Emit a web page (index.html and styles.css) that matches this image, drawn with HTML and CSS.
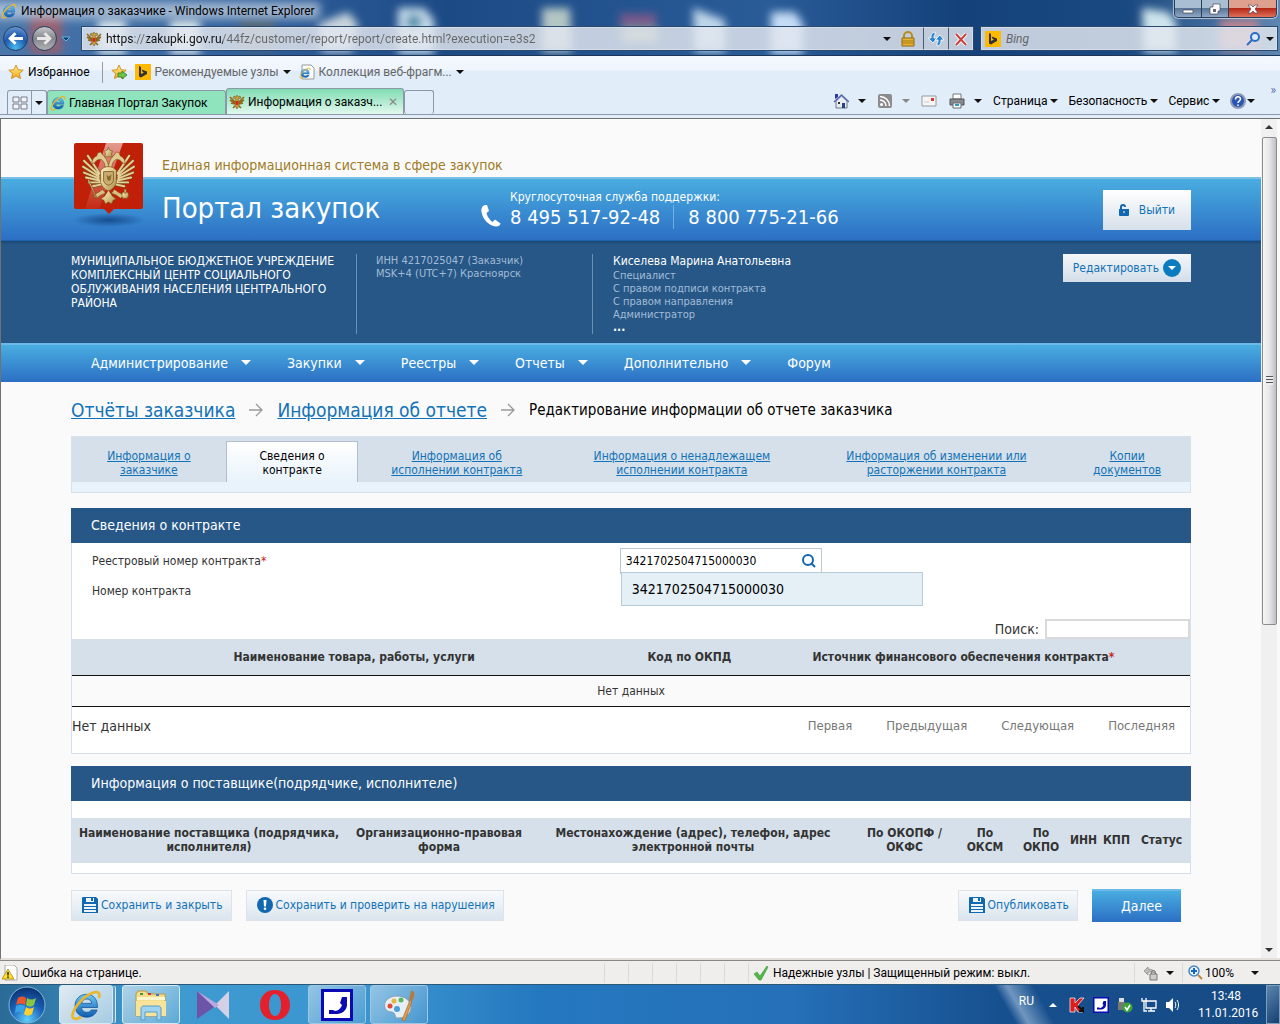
FILE: index.html
```html
<!DOCTYPE html>
<html lang="ru">
<head>
    <meta charset="UTF-8">
    <meta name="viewport" content="width=device-width, initial-scale=1.0">
    <title>Информация о заказчике</title>
    <link rel="stylesheet" href="styles.css">
</head>
<body>
    <!-- Shared icons -->
    <svg class="sprite" aria-hidden="true">
        <defs>
            <linearGradient id="gold" x1="0" y1="0" x2="1" y2="1">
                <stop offset="0" stop-color="#fff3c4"/>
                <stop offset=".5" stop-color="#dcc487"/>
                <stop offset="1" stop-color="#a98a45"/>
            </linearGradient>
            <radialGradient id="blue-ball" cx=".5" cy=".9" r=".9">
                <stop offset="0" stop-color="#5fd0ff"/>
                <stop offset=".5" stop-color="#1b63b8"/>
                <stop offset="1" stop-color="#0b2f6e"/>
            </radialGradient>
            <linearGradient id="ie-blue" x1="0" y1="0" x2="0" y2="1">
                <stop offset="0" stop-color="#6fc8f5"/>
                <stop offset="1" stop-color="#0c5cb0"/>
            </linearGradient>
            <linearGradient id="star-fill" x1="0" y1="0" x2="0" y2="1">
                <stop offset="0" stop-color="#fff08a"/>
                <stop offset="1" stop-color="#f5a418"/>
            </linearGradient>
        </defs>
        <symbol id="ie" viewBox="0 0 32 32">
            <path d="M27.500 18.500H11.500c.3 3 2.400 4.800 5.200 4.800 2.200 0 3.700-.8 4.600-2.300h5.800c-1.500 4.600-5.400 7.200-10.500 7.200C9.800 28.200 5 23.500 5 16.800S9.900 5.300 16.500 5.300c7 0 11.300 5 11 13.200zM21.700 14.400c-.3-2.800-2.300-4.400-5-4.400s-4.700 1.600-5.100 4.400z" fill="url(#ie-blue)" stroke="#0b4a92" stroke-width=".7"/>
            <path d="M29 9C30.500 4 28 2 23.500 3.500 14 6.500 3.500 18.500 2.500 26c-.6 5 4 4.500 8.500 2" fill="none" stroke="#e9b62c" stroke-width="2.600"/>
        </symbol>
        <symbol id="bing" viewBox="0 0 16 16">
            <path d="M0 0h16v16H0z" fill="#ffb900"/>
            <path d="M4 2l2 1v7l3-1.500-1.500-.8L6.600 5.500 12 7.500v2.600L6 13.600l-2-1.200z" fill="#333"/>
        </symbol>
        <symbol id="star" viewBox="0 0 16 16">
            <path d="M8 1l2.100 4.700 5.100.5-3.800 3.400 1.100 5L8 12l-4.500 2.600 1.100-5L.8 6.200l5.100-.5z" fill="url(#star-fill)" stroke="#c98310" stroke-width=".8"/>
        </symbol>
        <symbol id="wing" viewBox="0 0 54 60">
            <path d="M18 27L6 9M17 28L2 14M17 30L1 20M17 32L2 26M18 34L4 31M19 36L7 36M20 38L11 40" fill="none" stroke="#7a4a16" stroke-width="3.200" stroke-linecap="round"/>
            <path d="M18 27L6 9M17 28L2 14M17 30L1 20M17 32L2 26M18 34L4 31M19 36L7 36M20 38L11 40" fill="none" stroke="#e3cf98" stroke-width="2" stroke-linecap="round"/>
            <path d="M24 24c0-5-1-9-4-11-3-1-5 0-7 3l-3 1c0-4 2-7 5-8l1-3 3-1 2 3c3 2 5 6 6 11z" fill="#e0ca90" stroke="#7a4a16" stroke-width=".6"/>
            <path d="M21 43l-4 3-4 2-1 3 3 1 4-3 5-2z" fill="#d8bf80" stroke="#7a4a16" stroke-width=".6"/>
        </symbol>
        <symbol id="eagle" viewBox="0 0 54 60">
            <use href="#wing"/>
            <use href="#wing" transform="matrix(-1 0 0 1 54 0)"/>
            <g fill="url(#gold)" stroke="#7a4a16" stroke-width=".6">
                <path d="M27 0l1 3 3 1-1 3 1 3h-8l1-3-1-3 3-1z"/>
                <path d="M19 24c2-3 5-4 8-4s6 1 8 4v12c-1 4-4 7-8 9-4-2-7-5-8-9z"/>
                <path d="M27 44l4 6 4 3-3 1-2 4-3-2-3 2-2-4-3-1 4-3z"/>
                <circle cx="44" cy="49" r="3.500"/>
                <path d="M43 43h2v4h-2z"/>
                <path d="M6 34l1-1 8 18-1 1z"/>
            </g>
            <path d="M22 25h10v9c0 2-2 4-5 5-3-1-5-3-5-5z" fill="#c9ad70" stroke="#7a5320" stroke-width=".8"/>
            <path d="M25 28l2 2 3-2-1 6h-3z" fill="#8a6a2c"/>
        </symbol>
        <symbol id="eagle-small" viewBox="0 0 16 16">
            <path d="M6 8L1 3M6 9L1 6M6 10L2 9M10 8l5-5M10 9l5-3M10 10l4-1M6 12l-2 2M10 12l2 2" fill="none" stroke="#8d6a1c" stroke-width="1.600"/>
            <path d="M8 1l1 2 2-1 1 2-3 1 1 2v5l-2 3-2-3V7l1-2-3-1 1-2 2 1z" fill="#c9a03c" stroke="#6b4d12" stroke-width=".5"/>
            <path d="M6.500 7h3v3L8 11.500 6.500 10z" fill="#d0281c"/>
        </symbol>
        <symbol id="save" viewBox="0 0 16 16">
            <path d="M0 1a1 1 0 0 1 1-1h13l2 2v14H0z" fill="#1268b0"/>
            <path d="M4 1h8v4H4z" fill="#eef3f8"/>
            <path d="M9 1h2v3H9z" fill="#1268b0"/>
            <path d="M2 7h12v9H2z" fill="#eef3f8"/>
            <path d="M2 9.500h12M2 12.500h12M2 15.500h12" stroke="#1268b0"/>
        </symbol>
        <symbol id="handset" viewBox="0 0 20 22">
            <path d="M4 0C1 1 0 4 .5 7 1.500 14 8 21 15 21.500c3 0 4-1 4.500-3L14 14.500 11.500 17C9 15 6 11 5.500 8L8 6 6 0z" fill="#fff"/>
        </symbol>
        <symbol id="phone-app" viewBox="0 0 32 32">
            <path d="M0 0h32v32H0z" fill="#0a0ab4"/>
            <path d="M3 3h26v26H3z" fill="#fff"/>
            <path d="M21 8h5v8c0 5-5 9-10 9H8v-4h4l2 1c3 0 6-3 7-6l-2-2z" fill="#0a0ab4"/>
        </symbol>
    </svg>

    <!-- Browser frame -->
    <header class="glass">
        <svg class="backdrop" aria-hidden="true">
            <filter id="soft" x="-50%" y="-50%" width="200%" height="200%"><feGaussianBlur stdDeviation="4"/></filter>
            <filter id="haze" x="-50%" y="-50%" width="200%" height="200%"><feGaussianBlur stdDeviation="5"/></filter>
            <g filter="url(#soft)">
                <path d="M30 12h32v42H30z" fill="#96606f"/>
                <path d="M98 20h28v34H98z" fill="#dce6ea"/>
                <path d="M170 20h30v34h-30z" fill="#dce6ea"/>
                <path d="M240 20h34v30h-34z" fill="#53626f"/>
                <path d="M318 24l30-12 10 12-6 28h-30z" fill="#c8d4dc"/>
                <path d="M398 8h26l10 12v34h-36z" fill="#c6dcec"/>
                <circle cx="414" cy="22" r="8" fill="#4d8fa8"/>
                <path d="M542 8h28l2 44h-30z" fill="#b4c6c4"/>
                <path d="M620 14h36v12h-36z" fill="#7f5a8c"/>
                <path d="M622 28h36v14h-36z" fill="#95a892"/>
                <path d="M693 8l32 12v32h-30z" fill="#bed6ea"/>
                <path d="M771 12h24l8 12v30h-32z" fill="#c4dcf6"/>
                <path d="M1142 8l26 4 8 10v30h-32z" fill="#cde4ec"/>
                <path d="M1220 20h38v30h-38z" fill="#c2868e"/>
            </g>
            <rect x="-10" y="2" width="330" height="17" fill="#c4d2e2" opacity=".75" filter="url(#haze)"/>
        </svg>
        <div class="title-bar">
            <svg class="icon"><use href="#ie"/></svg>
            <span class="window-title">Информация о заказчике - Windows Internet Explorer</span>
            <div class="window-buttons">
                <button type="button" aria-label="Свернуть"><svg viewBox="0 0 14 12"><path d="M2 7h10v3H2z" fill="#fff" stroke="#445" stroke-width=".7"/></svg></button>
                <button type="button" aria-label="Развернуть"><svg viewBox="0 0 14 12"><path d="M5 1h7v7h-2v3H2V4h3z" fill="#fff" stroke="#445" stroke-width=".7"/><path d="M5 6h3v3H5z" fill="#667"/></svg></button>
                <button type="button" class="close" aria-label="Закрыть"><svg viewBox="0 0 14 12"><path d="M2 2h3l2 2 2-2h3L9 6l3 4H9L7 8l-2 2H2l3-4z" fill="#fff" stroke="#545" stroke-width=".7"/></svg></button>
            </div>
        </div>
        <div class="address-row">
            <button type="button" class="round back" aria-label="Назад"><svg viewBox="0 0 16 16"><path d="M15 8H3m5-5L3 8l5 5" fill="none" stroke="#fff" stroke-width="2.800"/></svg></button>
            <button type="button" class="round forward" aria-label="Вперед"><svg viewBox="0 0 16 16"><path d="M1 8h12M8 3l5 5-5 5" fill="none" stroke="#e8e8e8" stroke-width="2.800"/></svg></button>
            <button type="button" class="history" aria-label="Журнал"><svg viewBox="0 0 10 6"><path d="M1 1h8L5 5z" fill="#0b3c68" stroke="#5fb4e6"/></svg></button>
            <div class="address">
                <svg class="icon"><use href="#eagle-small"/></svg>
                <input type="text" class="url" aria-label="Адрес" value="https://zakupki.gov.ru/44fz/customer/report/report/create.html?execution=e3s2">
                <i class="caret"></i>
                <svg class="icon" viewBox="0 0 16 16"><path d="M4 8V5a4 4 0 0 1 8 0v3" fill="none" stroke="#b98d1d" stroke-width="2"/><path d="M2 7h12v8H2z" fill="#e3b437" stroke="#94690c"/><path d="M2 10h12M2 12h12" stroke="#a97b14"/></svg>
                <button type="button" aria-label="Обновить"><svg class="icon" viewBox="0 0 16 16"><path d="M7 1C3 2 3 4 3 7H0l5 5 4-5H6c0-2 0-3 1-3zM9 15c4-1 4-3 4-6h3l-4-5-5 5h3c0 2 0 3-1 3z" fill="#2f86d0" stroke="#fff" stroke-width=".8"/></svg></button>
                <button type="button" aria-label="Остановить"><svg class="icon" viewBox="0 0 16 16"><path d="M3 3l10 11M13 3L3 14" stroke="#fff" stroke-width="4"/><path d="M3 3l10 11M13 3L3 14" stroke="#c9413c" stroke-width="2"/></svg></button>
            </div>
            <div class="bing-box">
                <svg class="icon"><use href="#bing"/></svg>
                <input type="text" aria-label="Поиск Bing" placeholder="Bing">
                <svg class="icon" viewBox="0 0 16 16"><circle cx="10" cy="6" r="4" fill="#dcebfb" stroke="#2b6cc4" stroke-width="2"/><path d="M7 9l-5 5" stroke="#2b6cc4" stroke-width="2"/></svg>
                <i class="caret"></i>
            </div>
        </div>
    </header>

    <div class="toolbars">
        <div class="favorites-bar">
            <button type="button" class="tool"><svg class="icon"><use href="#star"/></svg>Избранное</button>
            <span class="divider"></span>
            <button type="button" class="tool muted" aria-label="Добавить"><svg class="icon" viewBox="0 0 16 16"><use href="#star"/><path d="M7 9h4V7l5 4-5 4v-2H7z" fill="#6cc24a" stroke="#2c7d1e" stroke-width=".8"/></svg></button>
            <button type="button" class="tool muted"><svg class="icon"><use href="#bing"/></svg>Рекомендуемые узлы<i class="caret"></i></button>
            <button type="button" class="tool muted"><svg class="icon" viewBox="0 0 16 16"><path d="M3 1h9l3 3v11H3z" fill="#fff" stroke="#999"/><use href="#ie" width="12" height="12" y="3"/></svg>Коллекция веб-фрагм...<i class="caret"></i></button>
        </div>
        <div class="tab-bar">
            <div class="quick-tabs">
                <button type="button" aria-label="Быстрые вкладки"><svg class="icon" viewBox="0 0 16 16"><path d="M1 2h6v5H1zM9 2h6v5H9zM1 9h6v5H1zM9 9h6v5H9z" fill="#f2f4f8" stroke="#777c88"/></svg></button>
                <button type="button" aria-label="Список вкладок"><i class="caret"></i></button>
            </div>
            <button type="button" class="browser-tab"><svg class="icon"><use href="#ie"/></svg>Главная Портал Закупок</button>
            <button type="button" class="browser-tab current"><svg class="icon"><use href="#eagle-small"/></svg>Информация о заказч...<span class="tab-close">✕</span></button>
            <button type="button" class="new-tab" aria-label="Новая вкладка"></button>
            <div class="commands">
                <svg class="icon" viewBox="0 0 16 16"><path d="M3 8v7h11V8L8.500 3z" fill="#e9edf4" stroke="#6b7688"/><path d="M1 9l7.500-7L16 9" fill="none" stroke="#5a6ab0" stroke-width="1.500"/><path d="M2 1h3v3L2 6z" fill="#2b39a8"/><path d="M9 10h3v5H9z" fill="#24457e"/><path d="M5 9h2v2H5z" fill="#333"/></svg>
                <i class="caret wide"></i>
                <svg class="icon" viewBox="0 0 16 16"><rect x="1" y="1" width="14" height="14" rx="2" fill="#8c8c8c"/><circle cx="4.500" cy="11.500" r="1.500" fill="#fff"/><path d="M3 7a6 6 0 0 1 6 6M3 3.500A9.500 9.500 0 0 1 12.500 13" fill="none" stroke="#fff" stroke-width="1.500"/></svg>
                <i class="caret wide faded"></i>
                <svg class="icon" viewBox="0 0 16 16"><path d="M1 3h14v10H1z" fill="#f6f6f6" stroke="#999"/><path d="M10 5h3v3h-3z" fill="#d33"/><path d="M3 9h5" stroke="#ccc"/></svg>
                <svg class="icon printer" viewBox="0 0 16 16"><path d="M4 1h8v5H4z" fill="#fff" stroke="#777"/><path d="M1 6h14v6H1z" fill="#868b92" stroke="#555"/><path d="M4 10h8v5H4z" fill="#fff" stroke="#667"/><path d="M6 12h4" stroke="#2a9ac0" stroke-width="2"/></svg>
                <i class="caret wide"></i>
                <button type="button">Страница<i class="caret"></i></button>
                <button type="button">Безопасность<i class="caret"></i></button>
                <button type="button">Сервис<i class="caret"></i></button>
                <button type="button" class="help" aria-label="Справка"><svg class="icon" viewBox="0 0 16 16"><circle cx="8" cy="8" r="7" fill="#2a55b5" stroke="#8f9bb3" stroke-width="2"/><path d="M5.500 6.500C5.500 3 10.500 3 10.500 6c0 2-2.500 2-2.500 4M8 11.500v1.500" fill="none" stroke="#fff" stroke-width="1.600"/></svg><i class="caret"></i></button>
                <span class="more">»</span>
            </div>
        </div>
    </div>

    <!-- Web page -->
    <div class="viewport">
        <main class="page">
            <div class="header">
                <svg class="emblem" viewBox="0 0 76 84" role="img" aria-label="Герб">
                    <defs>
                        <radialGradient id="shadow"><stop offset="0" stop-color="#0f3f80" stop-opacity=".8"/><stop offset="1" stop-color="#0f3f80" stop-opacity="0"/></radialGradient>
                        <linearGradient id="shine" x1="0" y1="0" x2="0" y2="1"><stop offset="0" stop-color="#fff" stop-opacity=".55"/><stop offset="1" stop-color="#fff" stop-opacity=".05"/></linearGradient>
                    </defs>
                    <ellipse cx="38" cy="77" rx="36" ry="7" fill="url(#shadow)"/>
                    <path d="M5 0h65a2 2 0 0 1 2 2v62a2 2 0 0 1-2 2H43l-5 5-5-5H5a2 2 0 0 1-2-2V2a2 2 0 0 1 2-2z" fill="#c01f08"/>
                    <path d="M35 0h17L28 66H14z" fill="url(#shine)"/>
                    <use href="#eagle" x="11" y="4" width="53" height="59"/>
                </svg>
                <div class="brand">
                    <div class="brand-top">Единая информационная система в сфере закупок</div>
                    <div class="brand-name">Портал закупок</div>
                </div>
                <div class="support">
                    <svg class="phone-icon"><use href="#handset"/></svg>
                    <div>
                        <div class="support-title">Круглосуточная служба поддержки:</div>
                        <div class="phones"><span>8 495 517-92-48</span><span>8 800 775-21-66</span></div>
                    </div>
                </div>
                <button type="button" class="logout"><svg viewBox="0 0 10 12"><path d="M0 5h10v6a1 1 0 0 1-1 1H1a1 1 0 0 1-1-1z" fill="#1268b0"/><path d="M2 6V3a2 2 0 0 1 4 0" fill="none" stroke="#1268b0" stroke-width="2"/><path d="M4 8h2" stroke="#fff"/></svg>Выйти</button>
            </div>

            <div class="account">
                <div class="org">МУНИЦИПАЛЬНОЕ БЮДЖЕТНОЕ УЧРЕЖДЕНИЕ КОМПЛЕКСНЫЙ ЦЕНТР СОЦИАЛЬНОГО ОБЛУЖИВАНИЯ НАСЕЛЕНИЯ ЦЕНТРАЛЬНОГО РАЙОНА</div>
                <div class="org-info">ИНН 4217025047 (Заказчик)<br>MSK+4 (UTC+7) Красноярск</div>
                <div class="user">
                    <div class="user-name">Киселева Марина Анатольевна</div>
                    Специалист<br>С правом подписи контракта<br>С правом направления<br>Администратор
                    <div class="dots">...</div>
                </div>
                <button type="button" class="edit">Редактировать<svg viewBox="0 0 20 20"><circle cx="10" cy="10" r="9" fill="#0c7cc0"/><path d="M6 8h8l-4 4z" fill="#fff"/></svg></button>
            </div>

            <nav class="menu">
                <a href="#">Администрирование<i></i></a>
                <a href="#">Закупки<i></i></a>
                <a href="#">Реестры<i></i></a>
                <a href="#">Отчеты<i></i></a>
                <a href="#">Дополнительно<i></i></a>
                <a href="#">Форум</a>
            </nav>

            <div class="content">
                <div class="breadcrumbs">
                    <a href="#">Отчёты заказчика</a>
                    <svg viewBox="0 0 14 14"><path d="M0 7h12M7 1l6 6-6 6" fill="none" stroke="#999" stroke-width="1.300"/></svg>
                    <a href="#">Информация об отчете</a>
                    <svg viewBox="0 0 14 14"><path d="M0 7h12M7 1l6 6-6 6" fill="none" stroke="#999" stroke-width="1.300"/></svg>
                    <span>Редактирование информации об отчете заказчика</span>
                </div>

                <div class="tabs">
                    <a href="#">Информация о<br>заказчике</a>
                    <span class="active">Сведения о<br>контракте</span>
                    <a href="#">Информация об<br>исполнении контракта</a>
                    <a href="#">Информация о ненадлежащем<br>исполнении контракта</a>
                    <a href="#">Информация об изменении или<br>расторжении контракта</a>
                    <a href="#">Копии<br>документов</a>
                </div>

                <section class="panel">
                    <h2>Сведения о контракте</h2>
                    <div class="field">
                        <label for="reg-number">Реестровый номер контракта<span class="required">*</span></label>
                        <div class="lookup">
                            <input type="text" id="reg-number" value="3421702504715000030">
                            <svg viewBox="0 0 14 14"><circle cx="6" cy="6" r="5" fill="none" stroke="#1268b0" stroke-width="2"/><path d="M9 9l4 4" stroke="#1268b0" stroke-width="2"/></svg>
                            <div class="suggestions">3421702504715000030</div>
                        </div>
                    </div>
                    <div class="field">
                        <span>Номер контракта</span>
                    </div>
                    <div class="search-row">
                        <label for="search">Поиск:</label>
                        <input type="text" id="search">
                    </div>
                    <table class="goods">
                        <thead>
                            <tr>
                                <th class="goods-name">Наименование товара, работы, услуги</th>
                                <th class="goods-code">Код по ОКПД</th>
                                <th class="goods-source">Источник финансового обеспечения контракта<span class="required">*</span></th>
                            </tr>
                        </thead>
                        <tbody>
                            <tr>
                                <td colspan="3">Нет данных</td>
                            </tr>
                        </tbody>
                    </table>
                    <div class="table-footer">
                        <span>Нет данных</span>
                        <div class="pager">
                            <a href="#">Первая</a>
                            <a href="#">Предыдущая</a>
                            <a href="#">Следующая</a>
                            <a href="#">Последняя</a>
                        </div>
                    </div>
                </section>

                <section class="panel">
                    <h2>Информация о поставщике(подрядчике, исполнителе)</h2>
                    <table class="suppliers">
                        <colgroup>
                            <col class="w-name"><col class="w-form"><col class="w-address"><col class="w-okopf">
                            <col class="w-oksm"><col class="w-okpo"><col class="w-code"><col class="w-code"><col>
                        </colgroup>
                        <thead>
                            <tr>
                                <th>Наименование поставщика (подрядчика, исполнителя)</th>
                                <th>Организационно-правовая форма</th>
                                <th>Местонахождение (адрес), телефон, адрес электронной почты</th>
                                <th>По ОКОПФ /<br>ОКФС</th>
                                <th>По ОКСМ</th>
                                <th>По ОКПО</th>
                                <th>ИНН</th>
                                <th>КПП</th>
                                <th class="status">Статус</th>
                            </tr>
                        </thead>
                    </table>
                </section>

                <div class="actions">
                    <button type="button"><svg><use href="#save"/></svg>Сохранить и закрыть</button>
                    <button type="button"><svg viewBox="0 0 16 16"><circle cx="8" cy="8" r="8" fill="#1268b0"/><path d="M6.500 3h3L9 9.500H7z" fill="#fff"/><circle cx="8" cy="11.800" r="1.300" fill="#fff"/></svg>Сохранить и проверить на нарушения</button>
                    <button type="button" class="publish"><svg><use href="#save"/></svg>Опубликовать</button>
                    <button type="button" class="next">Далее</button>
                </div>
            </div>
        </main>
        <div class="scrollbar">
            <i class="scroll-up"></i>
            <div class="thumb"><i></i></div>
            <i class="scroll-down"></i>
        </div>
    </div>

    <footer class="status-bar">
        <svg class="icon" viewBox="0 0 16 16"><path d="M3 0h9l3 3v12H3z" fill="#fff" stroke="#aaa"/><path d="M6 4l6 10H0z" fill="#ffdc2e" stroke="#a88a10" stroke-width=".8"/><path d="M6 7v3.500M6 11.500v1.500" stroke="#222" stroke-width="1.500"/></svg>
        <span>Ошибка на странице.</span>
        <div class="cells"><i></i><i></i><i></i><i></i><i></i><i></i></div>
        <div class="zone"><svg class="icon" viewBox="0 0 16 16"><path d="M1 9l3-2 3 4 7-10 1 1-7 13H6z" fill="#4fb848" stroke="#3a9a35" stroke-width=".6"/></svg>Надежные узлы | Защищенный режим: выкл.</div>
        <div class="privacy"><svg class="icon" viewBox="0 0 16 16"><path d="M1 6l4-4v2c4 0 7 2 8 5-3-2-5-2-8-2v3z" fill="#bbb" stroke="#888" stroke-width=".7"/><path d="M7 9h7v6H7z" fill="#ccc" stroke="#777"/><path d="M8.500 9V7.500a2 2 0 0 1 4 0V9" fill="none" stroke="#777"/></svg><i class="caret"></i></div>
        <div class="zoom"><svg class="icon" viewBox="0 0 16 16"><circle cx="7" cy="6" r="5" fill="#e6f2ff" stroke="#4888c8" stroke-width="1.500"/><path d="M7 3v6M4 6h6" stroke="#1464c0" stroke-width="2"/><path d="M11 10l4 4" stroke="#b88a3a" stroke-width="2"/></svg>100%<i class="caret"></i></div>
    </footer>

    <div class="taskbar">
        <button type="button" class="start" aria-label="Пуск">
            <svg viewBox="0 0 38 38"><circle cx="19" cy="19" r="18" fill="url(#blue-ball)" stroke="#83b7dc"/><path d="M10 12c3-2 5-2 8 0l-1 7c-3-2-6-2-9 0z" fill="#f0562c"/><path d="M19 12c3 2 6 2 9 0l-2 7c-3 2-5 2-8 0z" fill="#8cc63f"/><path d="M8 20c3-2 6-2 9 0l-2 7c-2-2-5-2-8 0z" fill="#38a4e8"/><path d="M18 21c3 2 5 2 8 0l-2 7c-3 2-5 2-8 0z" fill="#ffd02e"/></svg>
        </button>
        <button type="button" class="task open stacked" aria-label="Internet Explorer"><svg><use href="#ie"/></svg></button>
        <button type="button" class="task open" aria-label="Проводник"><svg viewBox="0 0 32 32"><path d="M1 5l2-3h8l2 3h17v22H1z" fill="#f3dc8a" stroke="#b99a3e"/><path d="M2 8h28v3H2z" fill="#fff6cf"/><path d="M5 4h3v2H5z" fill="#3f9a3f"/><path d="M13 4h3v2h-3z" fill="#c43c3c"/><path d="M21 5h3v2h-3z" fill="#3b76c8"/><path d="M1 12h30v15H1z" fill="#f7e39a"/><path d="M6 31V20c0-2 1-3 3-3h14c2 0 3 1 3 3v11h-4v-8H10v8z" fill="#9ed4f2" stroke="#5b9cc8"/></svg></button>
        <button type="button" class="task" aria-label="Плеер"><svg viewBox="0 0 32 32"><path d="M0 2l20 14L0 30z" fill="#6c55a8"/><path d="M32 2v28L18 16z" fill="#d6d0e6"/><path d="M0 2l22 14-4 3z" fill="#b9a9dc"/></svg></button>
        <button type="button" class="task" aria-label="Opera"><svg viewBox="0 0 32 32"><path fill-rule="evenodd" d="M16 1c9 0 15 6 15 15s-6 15-15 15S1 25 1 16 7 1 16 1zm0 4c-4 0-6 5-6 11s2 11 6 11 6-5 6-11-2-11-6-11z" fill="#e3202c"/></svg></button>
        <button type="button" class="task open dim" aria-label="Телефон"><svg><use href="#phone-app"/></svg></button>
        <button type="button" class="task open dim" aria-label="Paint"><svg viewBox="0 0 32 32"><path d="M14 7C5 7 0 13 2 19c2 5 7 3 9 5s0 5 5 5c7 0 12-5 12-11S22 7 14 7z" fill="#e6eef6" stroke="#8aa0b4"/><circle cx="7" cy="17" r="2.500" fill="#e04a3c"/><circle cx="11" cy="12" r="2.500" fill="#e8b63c"/><circle cx="18" cy="11" r="2.500" fill="#5cb85c"/><circle cx="14" cy="20" r="3" fill="#4aa0d8"/><path d="M19 31l8-20 2 1-7 20z" fill="#e09a4a" stroke="#a0642a" stroke-width=".6"/><path d="M26 11l2-9c3-1 4 3 3 6l-2 4z" fill="#b47a42"/></svg></button>

        <div class="tray">
            <span class="lang">RU</span>
            <i class="tray-up"></i>
            <svg class="icon" viewBox="0 0 16 16"><path d="M1 1h5v5l5-5h4L9 8l5 7H9L6 10v5H1z" fill="#e01b1b" stroke="#fff" stroke-width=".7"/><path d="M9 9l5 5v-4m0 4h-4" fill="none" stroke="#111" stroke-width="2"/></svg>
            <svg class="icon"><use href="#phone-app"/></svg>
            <svg class="icon" viewBox="0 0 16 16"><path d="M2 1h5v4H2z" fill="#ddd"/><path d="M1 5h7v8H1z" fill="#777"/><circle cx="10.500" cy="10.500" r="5" fill="#3da43a"/><path d="M8 10l2 3 3-5" fill="none" stroke="#fff" stroke-width="1.500"/></svg>
            <svg class="icon" viewBox="0 0 16 16"><path d="M5 4h10v7H5zM7 14h7M10 11v3" fill="none" stroke="#fff" stroke-width="1.300"/><path d="M1 1v3h4V1M3 4v10h3" fill="none" stroke="#fff" stroke-width="1.300"/></svg>
            <svg class="icon" viewBox="0 0 16 16"><path d="M1 5h3l4-4v14l-4-4H1z" fill="#fff"/><path d="M10 5c1 2 1 4 0 6M12 3c2 3 2 7 0 10" fill="none" stroke="#fff"/></svg>
            <div class="clock">13:48<br>11.01.2016</div>
        </div>
        <button type="button" class="show-desktop" aria-label="Свернуть все окна"></button>
    </div>
</body>
</html>
```
FILE: styles.css
```css
* {
    box-sizing: border-box;
}

body {
    margin: 0;
    min-height: 100vh;
    display: flex;
    flex-direction: column;
    font-family: Roboto, "Noto Sans", sans-serif;
    font-size: 12px;
    line-height: 16px;
    color: #000;
    background-color: #fafafa;
}

button,
input {
    font: inherit;
    color: inherit;
    margin: 0;
    padding: 0;
    border: none;
    background: none;
}

button {
    cursor: pointer;
    white-space: nowrap;
}

svg {
    display: block;
    flex: none;
}

.sprite {
    position: absolute;
    width: 0;
    height: 0;
}

.icon {
    width: 16px;
    height: 16px;
}

/* Small black drop-down arrow */
.caret {
    flex: none;
    border: 4px solid transparent;
    border-top-color: #111;
    border-bottom: none;
}

.faded {
    border-top-color: #888;
}

/* Browser window: translucent frame */
.glass {
    position: relative;
    z-index: 0;
    height: 56px;
    border-bottom: 1px solid #1d3557;
    background: linear-gradient(90deg, #4a77ab, #2f5f9b 20%, #1c4a85 35%, #2a5c98 60%, #14417a 75%, #1a4880 88%, #5f86b0);
}

/* Blurred desktop seen through the frame */
.backdrop {
    position: absolute;
    z-index: -1;
    top: 0;
    left: 0;
    width: 100%;
    height: 100%;
}

.title-bar {
    display: flex;
    align-items: flex-start;
    gap: 4px;
    height: 26px;
    padding-left: 1px;
}

.title-bar .icon {
    margin-top: 3px;
}

.window-title {
    flex: 1;
    padding-top: 3px;
}

.window-buttons {
    display: flex;
    margin-right: 3px;
    border: 1px solid #2a3f5a;
    border-top: none;
    border-radius: 0 0 5px 5px;
    overflow: hidden;
    box-shadow: 0 0 1px 1px rgba(255, 255, 255, .6);
}

.window-buttons button {
    width: 27px;
    height: 17px;
    display: flex;
    align-items: center;
    justify-content: center;
    border-right: 1px solid #2a3f5a;
    background: linear-gradient(#a9bdd3 45%, #5a7798 50%, #8fa9c6);
}

.window-buttons svg {
    width: 14px;
    height: 12px;
}

.window-buttons .close {
    width: 47px;
    border-right: none;
    background: linear-gradient(#e0a090 45%, #b52a17 50%, #e0705a);
}

.address-row {
    display: flex;
    align-items: center;
    height: 25px;
    padding: 0 2px 0 3px;
}

.round {
    display: flex;
    align-items: center;
    justify-content: center;
    width: 25px;
    height: 25px;
    margin-right: 4px;
    border: 1px solid #22405f;
    border-radius: 50%;
    background: radial-gradient(circle at 50% 90%, #49b6ef, #1d58ad 50%, #7ea9dc);
}

.round svg {
    width: 17px;
    height: 17px;
}

.forward {
    background: linear-gradient(#c6c6ca, #85868c 50%, #b0b0b4);
}

.history svg {
    width: 10px;
    height: 6px;
}

.address,
.bing-box {
    display: flex;
    align-items: center;
    height: 25px;
    border: 1px solid #2b4a6e;
    outline: 1px solid rgba(220, 232, 245, .6);
    outline-offset: -2px;
    background-color: rgba(225, 230, 238, .84);
}

.address {
    flex: 1;
    margin: 0 6px 0 10px;
    padding-left: 4px;
    gap: 4px;
}

.address .caret {
    margin-right: 5px;
}

.address button {
    align-self: stretch;
    display: flex;
    align-items: center;
    width: 25px;
    padding-left: 4px;
    border-left: 1px solid #4b5d72;
    margin-left: 3px;
}

.address button + button {
    margin-left: -4px;
}

.url {
    flex: 1;
    min-width: 0;
    color: transparent;
    background-image: linear-gradient(90deg, #111 28px, #666 28px, #666 41px, #111 41px, #111 117px, #666 117px);
    -webkit-background-clip: text;
    background-clip: text;
}

.bing-box {
    width: 298px;
    padding: 0 3px 0 4px;
    gap: 5px;
}

.bing-box input {
    flex: 1;
    min-width: 0;
    font-style: italic;
}

.bing-box input::placeholder {
    color: #666;
    opacity: 1;
}

/* Favorites, tabs and command bar */
.toolbars {
    border-bottom: 1px solid #70726f;
    background: linear-gradient(#f4f8fe, #f0f5fd 14px, #e1edf9 15px);
}

.favorites-bar {
    display: flex;
    align-items: center;
    height: 32px;
    padding-left: 8px;
    gap: 8px;
}

.tool {
    display: flex;
    align-items: center;
    gap: 4px;
}

.muted {
    color: #666;
}

.divider {
    height: 21px;
    margin-left: 4px;
    border-left: 1px solid #999;
}

.tab-bar {
    display: flex;
    align-items: flex-end;
    height: 27px;
    margin-bottom: 3px;
    padding-left: 7px;
    border-bottom: 1px solid #8b98a8;
}

.quick-tabs {
    display: flex;
    height: 24px;
    border: 1px solid #8b98a8;
    border-bottom: none;
    border-radius: 3px 3px 0 0;
}

.quick-tabs button {
    display: flex;
    align-items: center;
    justify-content: center;
    width: 23px;
}

.quick-tabs button + button {
    width: 15px;
    border-left: 1px solid #8b98a8;
}

.browser-tab {
    display: flex;
    align-items: center;
    gap: 3px;
    width: 179px;
    height: 24px;
    padding: 0 5px 0 2px;
    border: 1px solid #8b98a8;
    border-bottom: none;
    border-radius: 3px 3px 0 0;
    background-color: #8fe3bd;
}

.current {
    width: 178px;
    height: 26px;
    background: linear-gradient(#7fdcb2, #e2f8ee);
}

.tab-close {
    margin-left: auto;
    color: #888;
    font-family: "DejaVu Sans", sans-serif;
}

.new-tab {
    width: 30px;
    height: 24px;
    border: 1px solid #8b98a8;
    border-bottom: none;
    border-radius: 3px;
}

.commands {
    display: flex;
    align-items: center;
    flex: 1;
    justify-content: flex-end;
    height: 27px;
    padding-right: 4px;
}

.commands .wide {
    margin: 0 11px 0 9px;
}

.commands .printer {
    margin-left: 12px;
}

.commands button {
    display: flex;
    align-items: center;
    gap: 3px;
    margin-right: 10px;
}

.commands .help {
    gap: 1px;
    margin-right: 15px;
}

.more {
    align-self: flex-start;
    margin-top: -5px;
    color: #5a6fae;
}

/* Page area with its scrollbar */
.viewport {
    flex: 1;
    display: flex;
    border-left: 1px solid #70726f;
    border-bottom: 2px solid #e3e0dc;
    background-color: #fafafa;
}

.page {
    flex: 1;
    min-width: 0;
    font-family: "DejaVu Sans Condensed", "DejaVu Sans", Tahoma, sans-serif;
}

.page a {
    color: #1272b8;
}

.header,
.account,
.menu,
.content {
    padding: 0 70px;
}

.header {
    display: flex;
    height: 122px;
    border-bottom: 1px solid #1763b0;
    color: #fff;
    background: linear-gradient(#fafafa 58px, #7cc0e8 58px, #7cc0e8 60px, #49ade0 60px, #2c6fc4);
}

.emblem {
    width: 76px;
    height: 84px;
    margin-top: 24px;
}

.brand {
    width: 334px;
    padding-left: 15px;
    white-space: nowrap;
}

.brand-top {
    margin-top: 36px;
    font-size: 14px;
    line-height: 20px;
    color: #a07a24;
}

.brand-name {
    margin-top: 14px;
    font-size: 29px;
    line-height: 38px;
}

.support {
    display: flex;
    flex: 1;
    gap: 9px;
    padding-top: 70px;
    white-space: nowrap;
}

.phone-icon {
    width: 20px;
    height: 22px;
    margin-top: 16px;
}

.phones {
    display: flex;
    font-size: 20px;
    line-height: 24px;
}

.phones span + span {
    margin-left: 13px;
    padding-left: 14px;
    border-left: 1px solid #6fb0e4;
}

.logout {
    display: flex;
    align-items: center;
    gap: 10px;
    height: 40px;
    margin-top: 71px;
    padding: 0 16px;
    color: #1272b8;
    background: linear-gradient(#fff, #d5e0ea);
}

.logout svg {
    width: 10px;
    height: 12px;
}

.account {
    display: flex;
    align-items: flex-start;
    height: 102px;
    padding-top: 13px;
    font-size: 11px;
    line-height: 13px;
    color: #a3bcd6;
    background: linear-gradient(#1d4876, #265787 4px);
}

.org {
    width: 286px;
    height: 80px;
    padding-right: 12px;
    border-right: 1px solid #6c8fb4;
    font-size: 12px;
    line-height: 14px;
    color: #fff;
}

.org-info {
    width: 236px;
    height: 80px;
    padding-left: 19px;
    border-right: 1px solid #6c8fb4;
    white-space: nowrap;
}

.user {
    flex: 1;
    padding-left: 20px;
}

.user-name,
.dots {
    font-size: 12px;
    line-height: 15px;
    color: #fff;
}

.dots {
    font-weight: bold;
    line-height: 12px;
}

.edit {
    display: flex;
    align-items: center;
    gap: 3px;
    height: 28px;
    padding: 0 9px 0 10px;
    font-size: 12px;
    color: #1272b8;
    background: linear-gradient(#f4f7fa, #d3dee9);
}

.edit svg {
    width: 20px;
    height: 20px;
}

.menu {
    display: flex;
    align-items: center;
    gap: 36px;
    height: 39px;
    padding: 0 70px 2px 90px;
    border-top: 2px solid #6cb9e8;
    font-size: 14px;
    line-height: 20px;
    background: linear-gradient(#49ade0, #2c6fc4);
}

.menu a {
    display: flex;
    align-items: center;
    gap: 13px;
    color: #fff;
    text-decoration: none;
}

.menu i {
    border: 5px solid transparent;
    border-top-color: #fff;
    border-bottom: none;
}

.breadcrumbs {
    display: flex;
    align-items: center;
    gap: 14px;
    height: 54px;
    font-size: 19px;
    line-height: 24px;
    padding-top: 2px;
    white-space: nowrap;
}

.breadcrumbs svg {
    width: 14px;
    height: 14px;
}

.breadcrumbs span {
    font-size: 15px;
}

.tabs {
    display: grid;
    grid-template-columns: 154fr 133fr 197fr 254fr 256fr 126fr;
    height: 57px;
    padding-bottom: 10px;
    border: 1px solid #d8e2ea;
    line-height: 14px;
    text-align: center;
    background: linear-gradient(#d5e0ea 45px, #e8f3fb 45px);
}

.tabs a,
.tabs span {
    padding-top: 12px;
}

.tabs .active {
    margin-top: 4px;
    padding-top: 7px;
    border: 1px solid #b0bfd0;
    border-bottom: none;
    background: linear-gradient(#fff, #e8f3fb);
}

.panel {
    margin-top: 15px;
    border: 1px solid #d5e0ea;
    border-top: none;
    color: #333;
    background-color: #fff;
}

.panel + .panel {
    margin-top: 12px;
    padding-bottom: 10px;
}

.panel h2 {
    margin: 0 -1px;
    padding: 0 20px;
    font-size: 14px;
    font-weight: normal;
    line-height: 35px;
    color: #fff;
    background-color: #265787;
}

.required {
    color: #c22;
}

.field {
    display: grid;
    grid-template-columns: 49% 1fr;
    align-items: center;
    height: 30px;
}

.field:nth-of-type(1) {
    margin-top: 3px;
}

.field label,
.field > span {
    padding-left: 20px;
}

.lookup {
    position: relative;
    display: flex;
    align-items: center;
    width: 202px;
    height: 26px;
    padding: 0 5px;
    border: 1px solid #b9c8d4;
    color: #000;
}

.lookup input {
    flex: 1;
    min-width: 0;
}

.lookup svg {
    width: 14px;
    height: 14px;
}

.suggestions {
    position: absolute;
    top: 23px;
    left: 0;
    width: 302px;
    padding: 8px 10px;
    border: 1px solid #b9cbd6;
    font-size: 14px;
    background-color: #e4eff6;
}

.search-row {
    display: flex;
    justify-content: flex-end;
    align-items: center;
    gap: 6px;
    margin-top: 13px;
    font-size: 14px;
}

.search-row input {
    width: 145px;
    height: 20px;
    border: 2px solid #d8dadb;
}

table {
    width: 100%;
    border-collapse: collapse;
}

th {
    padding: 0 3px;
    line-height: 14px;
    background-color: #d5e0ea;
}

.goods {
    table-layout: fixed;
}

.goods th {
    height: 36px;
    padding: 0 6px 0 0;
}

.goods td {
    height: 31px;
    padding: 0;
    border: solid #111;
    border-width: 1px 0;
    text-align: center;
    background-color: #fafafa;
}

.goods-name {
    width: 51%;
}

.goods-code {
    width: 9%;
}

.goods-source {
    width: 40%;
}

.table-footer {
    display: flex;
    justify-content: space-between;
    height: 46px;
    padding-top: 11px;
    font-size: 14px;
}

.pager {
    display: flex;
    gap: 34px;
    margin-right: 15px;
    font-size: 13px;
}

.pager a {
    color: #777;
    text-decoration: none;
}

.suppliers {
    margin-top: 17px;
    table-layout: fixed;
}

.suppliers th {
    height: 45px;
}

.w-name { width: 274px; }
.w-form { width: 186px; }
.w-address { width: 322px; }
.w-okopf { width: 101px; }
.w-oksm { width: 60px; }
.w-okpo { width: 52px; }
.w-code { width: 33px; }

.suppliers th:nth-child(n + 7) {
    padding: 0;
}

.suppliers .status {
    padding-right: 12px;
}

.actions {
    display: flex;
    align-items: center;
    gap: 14px;
    margin: 15px 10px 30px 0;
}

.actions button {
    display: flex;
    align-items: center;
    gap: 3px;
    height: 31px;
    padding: 0 8px 0 10px;
    border: 1px solid #dde3e9;
    color: #1272b8;
    background: linear-gradient(#f8fafc, #dbe5ee);
}

.actions svg {
    width: 16px;
    height: 16px;
}

.actions .publish {
    margin-left: auto;
}

.actions .next {
    height: 33px;
    padding: 0 19px 0 29px;
    border: none;
    border-top: 2px solid #6cb9e8;
    font-size: 14px;
    color: #fff;
    background: linear-gradient(#49ade0, #2c6fc4);
}

.scrollbar {
    display: flex;
    flex-direction: column;
    align-items: center;
    width: 16px;
    margin-right: 3px;
    padding: 6px 0;
    background-color: #f0f0f0;
}

.scroll-up,
.scroll-down {
    border: 4px solid transparent;
    border-bottom-color: #333;
    border-top: none;
}

.scroll-down {
    margin-top: auto;
    border-top: 4px solid #333;
    border-bottom: none;
}

.thumb {
    display: flex;
    align-items: center;
    justify-content: center;
    width: 15px;
    height: 59%;
    margin-top: 8px;
    border: 1px solid #8c8c8c;
    border-radius: 2px;
    background: linear-gradient(90deg, #f6f6f6, #e6e6e8 50%, #bdbdc4);
}

.thumb i {
    width: 7px;
    height: 9px;
    background: repeating-linear-gradient(#555 0, #555 1px, #eee 1px, #eee 3px);
}

/* Browser status bar */
.status-bar {
    display: flex;
    align-items: center;
    height: 24px;
    padding: 1px 12px 0 2px;
    gap: 4px;
    border-top: 1px solid #888;
    background-color: #f0eeed;
}

.cells {
    display: flex;
    margin-left: auto;
    height: 20px;
}

.cells i {
    width: 24px;
    border-left: 1px solid #dcdad8;
}

.zone,
.privacy,
.zoom {
    display: flex;
    align-items: center;
    gap: 4px;
    height: 20px;
    border-left: 1px solid #dcdad8;
}

.zone {
    width: 382px;
    margin-left: -4px;
    padding-left: 4px;
}

.privacy {
    width: 44px;
    padding-left: 8px;
    gap: 7px;
}

.zoom {
    gap: 2px;
    padding-left: 4px;
}

.zoom .caret {
    margin: 0 9px 0 15px;
}

/* Windows taskbar */
.taskbar {
    display: flex;
    align-items: stretch;
    height: 40px;
    border-top: 1px solid #2b5877;
    color: #fff;
    background:
        linear-gradient(60deg, transparent 78%, rgba(200, 220, 240, .5) 79%, transparent 81%),
        linear-gradient(90deg, #2a6a96, #3f9bd0 12%, #3b94cf 30%, #2478bf 42%, #2570b8 62%, #17508f 78%, #164a83);
}

.start {
    width: 38px;
    margin: 0 13px 0 8px;
}

.start svg {
    width: 38px;
    height: 38px;
}

.task {
    display: flex;
    align-items: center;
    justify-content: center;
    width: 58px;
    margin-right: 4px;
}

.task svg {
    width: 32px;
    height: 32px;
}

.open {
    border: 1px solid #d5e8f5;
    border-radius: 3px;
    background: linear-gradient(135deg, rgba(255, 255, 255, .6), rgba(255, 255, 255, .15));
}

.stacked {
    width: 54px;
    margin-right: 9px;
    background: linear-gradient(135deg, rgba(255, 255, 255, .85), rgba(255, 255, 255, .55));
    box-shadow: 3px 0 0 -1px #5d9cc4, 4px 0 0 -1px #d5e8f5;
}

.dim {
    border-color: #9cc6e2;
    background: linear-gradient(135deg, rgba(255, 255, 255, .45), rgba(255, 255, 255, .08));
}

.tray {
    display: flex;
    align-items: center;
    gap: 8px;
    margin-left: auto;
}

.lang {
    margin: -8px 7px 0 0;
}

.tray-up {
    margin-right: 4px;
    border: 4px solid transparent;
    border-bottom-color: #fff;
    border-top: none;
}

.clock {
    width: 56px;
    margin: 0 12px 0 9px;
    line-height: 17px;
    text-align: center;
}

.show-desktop {
    width: 14px;
    border: 1px solid #7d9dbb;
    background: linear-gradient(135deg, #5b86b0, #153f70);
}
```
